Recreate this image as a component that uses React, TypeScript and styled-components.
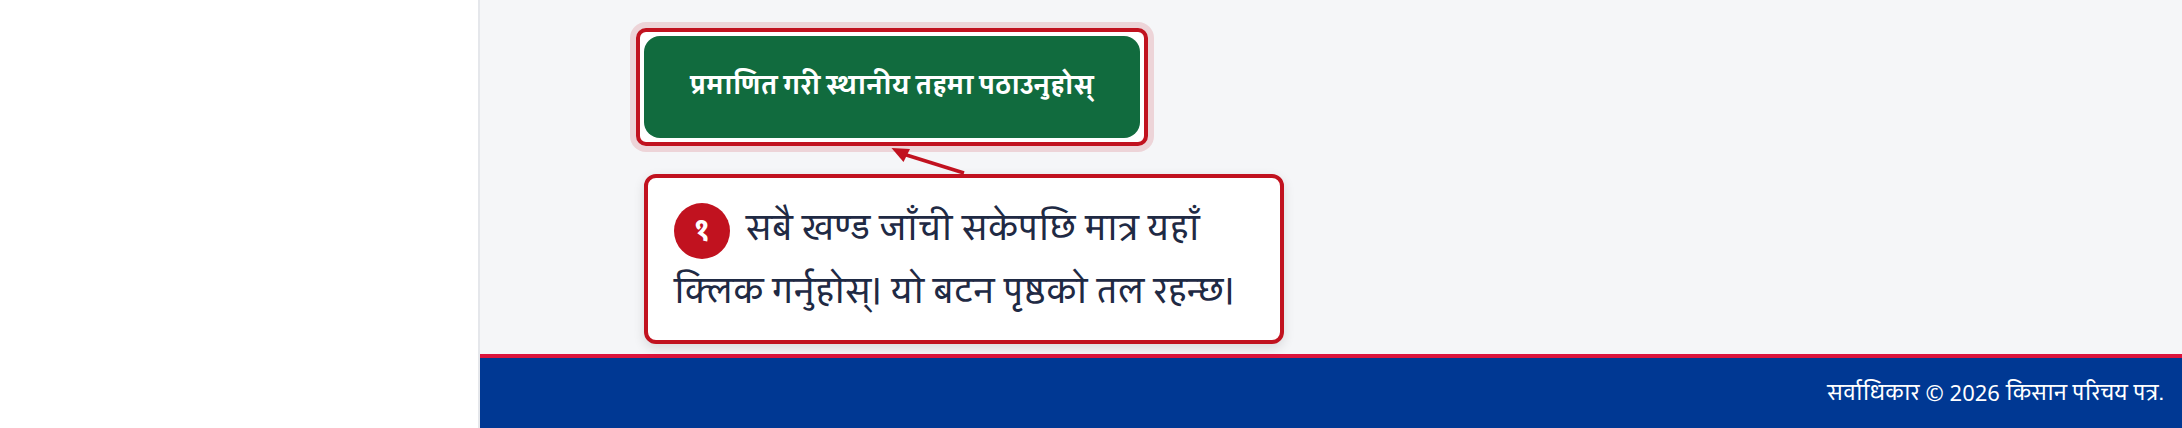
import React from 'react';
import styled, {createGlobalStyle} from 'styled-components';

const GlobalStyle = createGlobalStyle`
  html, body {
    margin: 0;
    padding: 0;
    height: 100%;
    overflow: hidden;
    background: #FFFFFF;
    font-family: "Sarala", "Noto Sans", sans-serif;
  }

  #root {
    height: 100%;
  }
`;

const Page = styled.div`
  display: flex;
  height: 428px;
  width: 2182px;
`;

const Sidebar = styled.aside`
  width: 480px;
  flex-shrink: 0;
  box-sizing: border-box;
  background: #FFFFFF;
  border-right: 2px solid #E5E7EB;
`;

const Main = styled.main`
  flex: 1;
  display: flex;
  flex-direction: column;
  background: #F5F6F8;
`;

const Content = styled.div`
  position: relative;
  flex: 1;
  padding: 28px 0 0 156px;
`;

const Highlight = styled.div`
  width: 512px;
  height: 118px;
  box-sizing: border-box;
  padding: 4px;
  border: 4px solid #C1121F;
  border-radius: 10px;
  background: #FFFFFF;
  box-shadow: 0 0 0 6px rgba(193, 18, 31, 0.15);
`;

const SubmitButton = styled.button`
  display: block;
  width: 100%;
  height: 100%;
  border: 0;
  border-radius: 16px;
  padding: 0 0 4px;
  background: #116B3E;
  color: #FFFFFF;
  font-family: inherit;
  font-size: 25.8px;
  font-weight: 700;
`;

const Arrow = styled.svg`
  position: absolute;
  left: 408px;
  top: 144px;
  width: 80px;
  height: 32px;
`;

const Callout = styled.div`
  width: 640px;
  height: 170px;
  box-sizing: border-box;
  margin: 28px 0 0 8px;
  padding: 18px 26px;
  border: 4px solid #C1121F;
  border-radius: 12px;
  background: #FFFFFF;
  box-shadow: 0 4px 12px rgba(0, 0, 0, 0.12);
  color: #1F2A44;
  font-size: 36px;
  line-height: 63px;
`;

const StepBadge = styled.span`
  display: inline-flex;
  align-items: center;
  justify-content: center;
  width: 56px;
  height: 56px;
  margin-right: 16px;
  border-radius: 50%;
  background: #C1121F;
  color: #FFFFFF;
  font-size: 30px;
  font-weight: 700;
  vertical-align: middle;
`;

const Footer = styled.footer`
  height: 74px;
  box-sizing: border-box;
  display: flex;
  align-items: center;
  justify-content: flex-end;
  gap: 0.28em;
  padding: 0 18px 2px;
  border-top: 4px solid #DC143C;
  background: #003893;
  color: #FFFFFF;
  font-size: 22px;
`;

const FooterYear = styled.span`
  font-family: "Noto Sans", sans-serif;
`;

export default function App() {
    return (
        <>
            <GlobalStyle/>
            <Page lang="ne">
                <Sidebar/>
                <Main>
                    <Content>
                        <Highlight>
                            <SubmitButton>प्रमाणित गरी स्थानीय तहमा पठाउनुहोस्</SubmitButton>
                        </Highlight>
                        <Arrow viewBox="0 0 80 32">
                            <path d="M76 29 L12 9" stroke="#C1121F" strokeWidth="3.5" fill="none"/>
                            <path d="M3.5 4 L22 5 L15.5 18 Z" fill="#C1121F"/>
                        </Arrow>
                        <Callout>
                            <StepBadge>१</StepBadge>
                            सबै खण्ड जाँची सकेपछि मात्र यहाँ क्लिक गर्नुहोस्। यो बटन पृष्ठको तल रहन्छ।
                        </Callout>
                    </Content>
                    <Footer>
                        <span>सर्वाधिकार</span>
                        <FooterYear>© 2026</FooterYear>
                        <span>किसान परिचय पत्र.</span>
                    </Footer>
                </Main>
            </Page>
        </>
    );
}
